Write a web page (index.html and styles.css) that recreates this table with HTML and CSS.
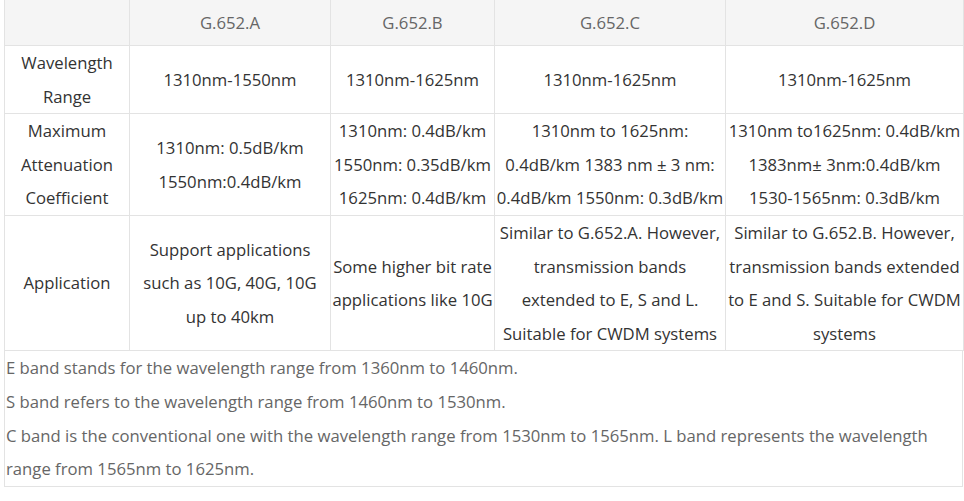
FILE: index.html
```html
<!DOCTYPE html>
<html lang="en">
<head>
<meta charset="utf-8">
<title>G.652 fiber comparison</title>
<link rel="stylesheet" href="styles.css">
</head>
<body>
<div class="page">
  <table class="spec">
    <colgroup>
      <col class="c1"><col class="c2"><col class="c3"><col class="c4"><col class="c5">
    </colgroup>
    <thead>
      <tr>
        <th></th>
        <th>G.652.A</th>
        <th>G.652.B</th>
        <th>G.652.C</th>
        <th>G.652.D</th>
      </tr>
    </thead>
    <tbody>
      <tr>
        <td>Wavelength<br>Range</td>
        <td>1310nm-1550nm</td>
        <td>1310nm-1625nm</td>
        <td>1310nm-1625nm</td>
        <td>1310nm-1625nm</td>
      </tr>
      <tr>
        <td>Maximum<br>Attenuation<br>Coefficient</td>
        <td>1310nm: 0.5dB/km<br>1550nm:0.4dB/km</td>
        <td>1310nm: 0.4dB/km<br>1550nm: 0.35dB/km<br>1625nm: 0.4dB/km</td>
        <td>1310nm to 1625nm:<br>0.4dB/km 1383 nm ± 3 nm:<br>0.4dB/km 1550nm: 0.3dB/km</td>
        <td>1310nm to1625nm: 0.4dB/km<br>1383nm± 3nm:0.4dB/km<br>1530-1565nm: 0.3dB/km</td>
      </tr>
      <tr>
        <td>Application</td>
        <td>Support applications such as 10G, 40G, 10G up to 40km</td>
        <td>Some higher bit rate applications like 10G</td>
        <td>Similar to G.652.A. However, transmission bands extended to E, S and L. Suitable for CWDM systems</td>
        <td>Similar to G.652.B. However, transmission bands extended to E and S. Suitable for CWDM systems</td>
      </tr>
    </tbody>
  </table>
  <div class="notes">
    <p>E band stands for the wavelength range from 1360nm to 1460nm.</p>
    <p>S band refers to the wavelength range from 1460nm to 1530nm.</p>
    <p>C band is the conventional one with the wavelength range from 1530nm to 1565nm. L band represents the wavelength range from 1565nm to 1625nm.</p>
  </div>
</div>
</body>
</html>
```
FILE: styles.css
```css
html, body {
  margin: 0;
  padding: 0;
  background: #fff;
}
body {
  font-family: "Open Sans", "Liberation Sans", sans-serif;
  font-size: 16.7px;
  line-height: 33.6px;
  color: #333;
}
.page {
  padding-left: 4px;
  width: 959px;
}
.spec {
  width: 959px;
  border-collapse: collapse;
  table-layout: fixed;
}
.c1 { width: 125px; }
.c2 { width: 201px; }
.c3 { width: 164px; }
.c4 { width: 231px; }
.c5 { width: 238px; }
.spec th,
.spec td {
  border: 1px solid #e3e3e3;
  text-align: center;
  vertical-align: middle;
  padding: 0 1px;
}
.spec th {
  border-top: none;
  background: #f5f5f5;
  font-weight: normal;
  color: #666;
  height: 45px;
  padding-top: 0;
  padding-bottom: 0;
}
.spec td {
  color: #333;
}
.notes {
  border: 1px solid #e3e3e3;
  border-top: none;
  color: #666;
  padding: 0 20px 0 1px;
}
.notes p {
  margin: 0;
}
```
